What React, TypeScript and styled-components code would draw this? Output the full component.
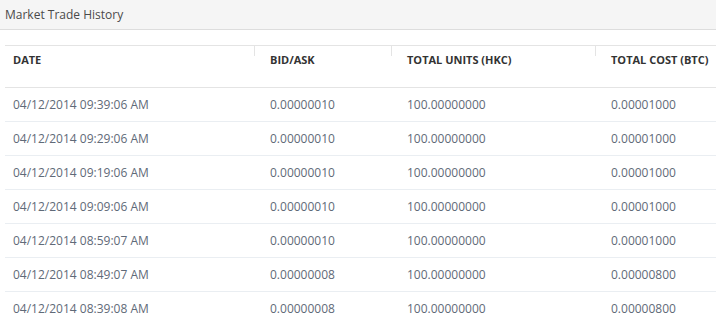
import styled, { createGlobalStyle } from "styled-components";

const GlobalStyle = createGlobalStyle`
    body {
        margin: 0;
        background: #fff;
        font-family: "Open Sans", "Liberation Sans", sans-serif;
    }
`

const Panel = styled.div`
    width: 716px;
    overflow: hidden;
`

const PanelHeading = styled.div`
    height: 29px;
    padding: 0 5px;
    display: flex;
    align-items: center;
    background: #f5f5f5;
    border-bottom: 1px solid #dddddd;
    color: #4a4a4a;
    font-size: 12px;
`

const Table = styled.div`
    margin: 15px 0 0 5px;
    border-top: 1px solid #e4e4e4;
`

const Row = styled.div<{ $head?: boolean }>`
    display: grid;
    grid-template-columns: 249px 137px 204px 1fr;
    height: ${(p) => (p.$head ? "41px" : "33px")};
    border-bottom: 1px solid ${(p) => (p.$head ? "#e4e4e4" : "#eaeef2")};
`

const HeadCell = styled.div<{ $first?: boolean }>`
    position: relative;
    padding: 6px 0 0 ${(p) => (p.$first ? "8px" : "16px")};
    line-height: 16px;
    font-size: 11px;
    font-weight: 700;
    color: #333;
    white-space: nowrap;

    &::before {
        content: "";
        display: ${(p) => (p.$first ? "none" : "block")};
        position: absolute;
        left: 0;
        top: 0;
        width: 1px;
        height: 10px;
        background: #e4e4e4;
    }
`

const Cell = styled.div<{ $first?: boolean }>`
    display: flex;
    align-items: center;
    padding-left: ${(p) => (p.$first ? "8px" : "16px")};
    font-size: 12px;
    color: #5f6a78;
    white-space: nowrap;
`

const trades = [
    { date: "04/12/2014 09:39:06 AM", bid: "0.00000010", units: "100.00000000", cost: "0.00001000" },
    { date: "04/12/2014 09:29:06 AM", bid: "0.00000010", units: "100.00000000", cost: "0.00001000" },
    { date: "04/12/2014 09:19:06 AM", bid: "0.00000010", units: "100.00000000", cost: "0.00001000" },
    { date: "04/12/2014 09:09:06 AM", bid: "0.00000010", units: "100.00000000", cost: "0.00001000" },
    { date: "04/12/2014 08:59:07 AM", bid: "0.00000010", units: "100.00000000", cost: "0.00001000" },
    { date: "04/12/2014 08:49:07 AM", bid: "0.00000008", units: "100.00000000", cost: "0.00000800" },
    { date: "04/12/2014 08:39:08 AM", bid: "0.00000008", units: "100.00000000", cost: "0.00000800" },
]

const App = () => {
    return (
        <Panel>
            <GlobalStyle />
            <PanelHeading>Market Trade History</PanelHeading>
            <Table>
                <Row $head>
                    <HeadCell $first>DATE</HeadCell>
                    <HeadCell>BID/ASK</HeadCell>
                    <HeadCell>TOTAL UNITS (HKC)</HeadCell>
                    <HeadCell>TOTAL COST (BTC)</HeadCell>
                </Row>
                {trades.map((t) => (
                    <Row key={t.date}>
                        <Cell $first>{t.date}</Cell>
                        <Cell>{t.bid}</Cell>
                        <Cell>{t.units}</Cell>
                        <Cell>{t.cost}</Cell>
                    </Row>
                ))}
            </Table>
        </Panel>
    )
}

export default App;
